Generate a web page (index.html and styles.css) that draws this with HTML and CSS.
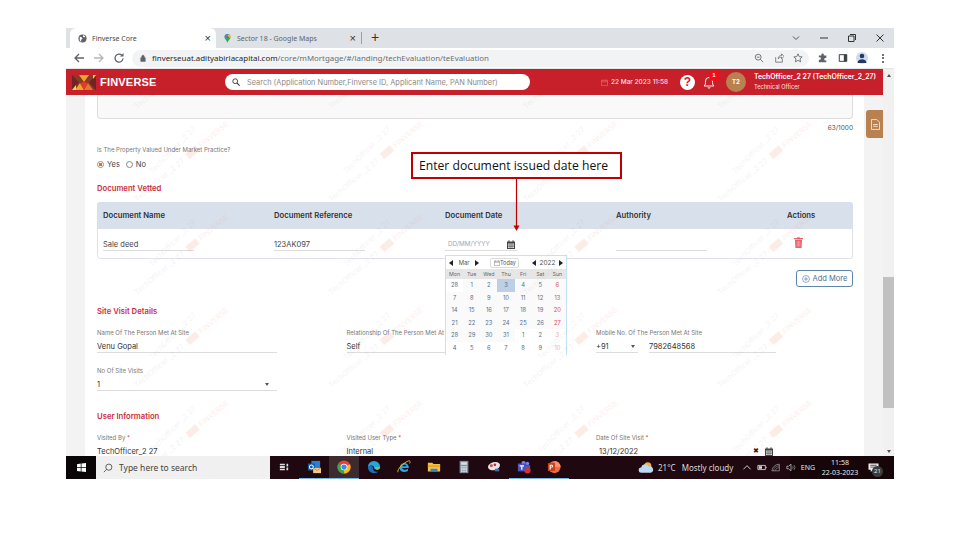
FILE: index.html
```html
<!DOCTYPE html>
<html lang="en">
<head>
<meta charset="utf-8">
<title>Finverse Core</title>
<link rel="stylesheet" href="styles.css">
</head>
<body>
<div class="screen">
  <div class="tabstrip">
    <div class="tab active">
      <svg class="fav" viewBox="0 0 10 10"><circle cx="5" cy="5" r="4.5" fill="#5f6368"/><path d="M2 3l2 .5 1 1.500-1.500 1.500V9L2 7zM6 1l2 1.500L7 4 5.500 3z" fill="#fff"/></svg>
      <span class="tabtitle">Finverse Core</span><span class="tabx">×</span>
    </div>
    <div class="tab">
      <svg class="fav" viewBox="0 0 10 12"><path d="M5 0a4 4 0 0 1 4 4c0 3-3 4-4 8C4 8 1 7 1 4a4 4 0 0 1 4-4z" fill="#34a853"/><path d="M2 1.500A4 4 0 0 1 5 0l2 2-4 3-2-1a4 4 0 0 1 1-2.500z" fill="#4285f4"/><path d="M7 .5A4 4 0 0 1 9 4L7 5 5 2z" fill="#fbbc04"/><circle cx="5" cy="4" r="1.500" fill="#ea4335"/></svg>
      <span class="tabtitle">Sector 18 - Google Maps</span><span class="tabx">×</span>
    </div>
    <span class="tabsep"></span>
    <span class="tabplus">+</span>
    <div class="winctl">
      <svg viewBox="0 0 10 10"><path d="M2 3.500l3 3 3-3" fill="none" stroke="#555" stroke-width="1"/></svg>
      <svg viewBox="0 0 10 10"><path d="M1 5h8" stroke="#333" stroke-width="1"/></svg>
      <svg viewBox="0 0 10 10"><path d="M3 1.500h5.500V7M1.500 3h5.500v5.500H1.500z" fill="none" stroke="#333" stroke-width="1"/></svg>
      <svg viewBox="0 0 10 10"><path d="M1.500 1.500l7 7M8.500 1.500l-7 7" stroke="#333" stroke-width="1"/></svg>
    </div>
  </div>

  <div class="toolbar">
    <svg class="navbtn" viewBox="0 0 12 12"><path d="M11 6H2M6 2L2 6l4 4" fill="none" stroke="#5f6368" stroke-width="1.300"/></svg>
    <svg class="navbtn" viewBox="0 0 12 12"><path d="M1 6h9M6 2l4 4-4 4" fill="none" stroke="#b4b7bb" stroke-width="1.300"/></svg>
    <svg class="navbtn" viewBox="0 0 12 12"><path d="M10 6.500A4 4 0 1 1 8.800 3.200" fill="none" stroke="#5f6368" stroke-width="1.300"/><path d="M10.500 1v3.500H7z" fill="#5f6368"/></svg>
    <div class="omnibox">
      <svg class="lock" viewBox="0 0 8 10"><path d="M1 4.500h6V9.500H1zM2.300 4.500V3a1.700 1.700 0 0 1 3.400 0v1.500" fill="#5f6368" stroke="#5f6368" stroke-width=".7"/></svg>
      <span class="url"><span class="host">finverseuat.adityabirlacapital.com</span>/core/mMortgage/#/landing/techEvaluation/teEvaluation</span>
      <svg class="omni-ic" viewBox="0 0 12 12"><circle cx="5" cy="5" r="3.500" fill="none" stroke="#5f6368"/><path d="M7.500 7.500L11 11M3.300 5h3.400" stroke="#5f6368"/></svg>
      <svg class="omni-ic" viewBox="0 0 12 12"><path d="M2 5v6h8V7M5 7c0-3 2-4 4-4V1l3 3-3 3V5C7 5 6 6 5 7z" fill="none" stroke="#5f6368" stroke-width=".9"/></svg>
      <svg class="omni-ic" viewBox="0 0 12 12"><path d="M6 1l1.500 3.300 3.500.4-2.600 2.400.7 3.500L6 8.800l-3.100 1.800.7-3.500L1 4.700l3.500-.4z" fill="none" stroke="#5f6368"/></svg>
    </div>
    <svg class="tool-ic first" viewBox="0 0 12 12"><path d="M1 3h3V2a1.500 1.500 0 0 1 3 0v1h3v3H9a1.500 1.500 0 0 0 0 3h1v2H1V8h1a1.500 1.500 0 0 0 0-3H1z" fill="#5f6368"/></svg>
    <svg class="tool-ic" viewBox="0 0 12 12"><path d="M1.500 2h9v8h-9z" fill="none" stroke="#3c4043" stroke-width="1.200"/><path d="M7 2h3.500v8H7z" fill="#3c4043"/></svg>
    <span class="profile"><svg viewBox="0 0 12 12"><circle cx="6" cy="4" r="2.300" fill="#1f3a68"/><path d="M1.500 11c0-5 9-5 9 0z" fill="#1f3a68"/></svg></span>
    <span class="dots"><i></i><i></i><i></i></span>
  </div>

  <div class="viewport">
    <div class="app">
      <header class="appbar">
        <svg class="logo" viewBox="0 0 24 15"><rect width="24" height="15" fill="#8a3a28"/><path d="M0 0l7 7.500L0 15zM24 0l-7 7.500 7 7.500z" fill="#6e2622"/><path d="M7 0l5 7 5-7zM3 15l5-7 4 7z" fill="#f0a52a"/><path d="M12 15l4-7 5 7z" fill="#e8762a"/><path d="M8 8l4-1 4 1-4 7z" fill="#e23a2c"/><path d="M0 15l4-5v5zM24 0l-3 4V0z" fill="#f5d84a"/></svg>
        <span class="brand">FINVERSE</span>
        <div class="search">
          <svg viewBox="0 0 10 10"><circle cx="4" cy="4" r="3" fill="none" stroke="#333" stroke-width="1.100"/><path d="M6.300 6.300L9.500 9.500" stroke="#333" stroke-width="1.300"/></svg>
          <span>Search (Application Number,Finverse ID, Applicant Name, PAN Number)</span>
        </div>
        <svg class="dateic" viewBox="0 0 8 8"><path d="M.5 1.500h7v6h-7zM.5 3.200h7M2.300.5v1.500M5.700.5v1.500" fill="none" stroke="#e27a6e" stroke-width=".7"/></svg>
        <span class="datetxt">22 Mar 2023 11:58</span>
        <span class="helpic">?</span>
        <span class="bell">
          <svg viewBox="0 0 12 14"><path d="M1 11c1.500-1 1.500-2.500 1.500-5a3.500 3.500 0 0 1 7 0c0 2.500 0 4 1.500 5zM5 12.300a1 1 0 0 0 2 0" fill="none" stroke="#fff" stroke-width=".9"/></svg>
          <b class="badge">1</b>
        </span>
        <span class="avatar">T2</span>
        <div class="who">
          <div class="who-name">TechOfficer_2 27 (TechOfficer_2_27)</div>
          <div class="who-role">Technical Officer</div>
        </div>
      </header>

      <div class="body">
        <main class="form">
          <div class="notebox"></div>
          <div class="counter">63/1000</div>
          <div class="label q">Is The Property Valued Under Market Practice?</div>
          <div class="radios">
            <span class="radio on"></span><span>Yes</span>
            <span class="radio second"></span><span>No</span>
          </div>
          <h2 class="title vetted">Document Vetted</h2>
          <div class="doc-table">
            <div class="doc-head">
              <span>Document Name</span><span>Document Reference</span><span>Document Date</span><span>Authority</span><span>Actions</span>
            </div>
            <div class="doc-row">
              <div class="cell"><span class="uline">Sale deed</span></div>
              <div class="cell"><span class="uline">123AK097</span></div>
              <div class="cell datecell">
                <span class="uline dateinput"><span class="ph">DD/MM/YYYY</span>
                  <svg class="calic" viewBox="0 0 8 9"><path d="M0 1.500h8V9H0z" fill="#444"/><path d="M1 3.500h6v4.500H1z" fill="#ddd"/><path d="M1 5h6M1 6.500h6M3 3.500V8M5 3.500V8" stroke="#444" stroke-width=".5"/><path d="M2 .3v2M6 .3v2" stroke="#444"/></svg>
                </span>
                <div class="calendar">
                  <div class="cal-nav">
                    <span class="tri l"></span><span class="cal-m">Mar</span><span class="tri r"></span>
                    <span class="today">
                      <svg viewBox="0 0 8 8"><path d="M.5 1.500h7v6h-7zM.5 3h7M2 .5v1.500M6 .5v1.500" fill="none" stroke="#666" stroke-width=".6"/></svg>Today</span>
                    <span class="tri l y"></span><span class="cal-y">2022</span><span class="tri r"></span>
                  </div>
                  <div class="cal-grid heads"><span>Mon</span><span>Tue</span><span>Wed</span><span>Thu</span><span>Fri</span><span>Sat</span><span>Sun</span></div>
                  <div class="cal-grid days">
                    <span>28</span><span>1</span><span>2</span><span class="sel">3</span><span>4</span><span>5</span><span class="sun">6</span>
                    <span>7</span><span>8</span><span>9</span><span>10</span><span>11</span><span>12</span><span class="sun">13</span>
                    <span>14</span><span>15</span><span>16</span><span>17</span><span>18</span><span>19</span><span class="sun">20</span>
                    <span>21</span><span>22</span><span>23</span><span>24</span><span>25</span><span>26</span><span class="sun">27</span>
                    <span>28</span><span>29</span><span>30</span><span>31</span><span class="out">1</span><span class="out">2</span><span class="sun out">3</span>
                    <span class="out">4</span><span class="out">5</span><span class="out">6</span><span class="out">7</span><span class="out">8</span><span class="out">9</span><span class="sun out">10</span>
                  </div>
                </div>
              </div>
              <div class="cell"><span class="uline"></span></div>
              <div class="cell act">
                <svg class="trash" viewBox="0 0 10 12"><path d="M3.500 1V.3h3V1H10v1.300H0V1z" fill="#e8626c"/><path d="M1 3h8l-.6 9H1.600z" fill="#e8626c"/><path d="M3.500 4.500v6M5 4.500v6M6.500 4.500v6" stroke="#f6c3c7" stroke-width=".6"/></svg>
              </div>
            </div>
          </div>
          <div class="addrow">
            <span class="addmore"><svg viewBox="0 0 10 10"><circle cx="5" cy="5" r="4.300" fill="none" stroke="#527da3" stroke-width=".8"/><path d="M5 2.500v5M2.500 5h5" stroke="#527da3" stroke-width=".8"/></svg>Add More</span>
          </div>

          <h2 class="title site">Site Visit Details</h2>
          <div class="fields">
            <div class="field"><div class="label">Name Of The Person Met At Site</div><div class="value">Venu Gopal</div></div>
            <div class="field"><div class="label">Relationship Of The Person Met At Site</div><div class="value">Self</div></div>
            <div class="field"><div class="label">Mobile No. Of The Person Met At Site</div>
              <div class="phone">
                <div class="value">+91<span class="caret"></span></div>
                <div class="value">7982648568</div>
              </div>
            </div>
            <div class="field"><div class="label">No Of Site Visits</div><div class="value">1<span class="caret wide"></span></div></div>
          </div>

          <h2 class="title user">User Information</h2>
          <div class="fields">
            <div class="field"><div class="label">Visited By <em>*</em></div><div class="value">TechOfficer_2 27</div></div>
            <div class="field"><div class="label">Visited User Type <em>*</em></div><div class="value">Internal</div></div>
            <div class="field"><div class="label">Date Of Site Visit <em>*</em></div>
              <div class="value dateval"><span>13/12/2022</span>
                <span class="clr">✖</span>
                <svg class="calic" viewBox="0 0 8 9"><path d="M0 1.500h8V9H0z" fill="#444"/><path d="M1 3.500h6v4.500H1z" fill="#ddd"/><path d="M1 5h6M1 6.500h6M3 3.500V8M5 3.500V8" stroke="#444" stroke-width=".5"/><path d="M2 .3v2M6 .3v2" stroke="#444"/></svg>
              </div>
            </div>
          </div>
        </main>
        <div class="sidetab">
          <svg viewBox="0 0 10 12"><path d="M.5.500h6l3 3v8H.5z" fill="none" stroke="#fff" stroke-width=".8"/><path d="M2.500 6h5M2.500 8h5" stroke="#fff" stroke-width=".8"/></svg>
        </div>
        <svg class="wm" width="817" height="361" aria-hidden="true">
          <defs>
            <pattern id="wmp" x="66" y="19" width="194.500" height="93" patternUnits="userSpaceOnUse">
              <text x="20" y="60" transform="rotate(-45 20 60)" class="wm-t">TechOfficer _2 27</text>
              <g transform="rotate(-40 5 88)">
                <text x="5" y="88" class="wm-t">TechOfficer _2 27</text>
                <rect x="73" y="82" width="13" height="7" class="wm-logo"/>
                <text x="89" y="88" class="wm-f">FINVERSE</text>
              </g>
            </pattern>
          </defs>
          <rect width="817" height="361" fill="url(#wmp)"/>
        </svg>
      </div>
    </div>
    <div class="scrollbar">
      <span class="sb-up"></span>
      <span class="sb-thumb"></span>
      <span class="sb-down"></span>
    </div>
  </div>

  <footer class="taskbar">
    <span class="start"><svg viewBox="0 0 12 12"><path d="M0 1.500l5-.7v4.700H0zM6 .7L12 0v5.500H6zM0 6.500h5v4.700l-5-.7zM6 6.500h6V12l-6-.7z" fill="#fff"/></svg></span>
    <div class="tsearch">
      <svg viewBox="0 0 12 12"><circle cx="7" cy="5" r="3.700" fill="none" stroke="#333" stroke-width=".9"/><path d="M4.300 7.700L1 11" stroke="#333" stroke-width=".9"/></svg>
      <span>Type here to search</span>
    </div>
    <div class="tasks">
      <span class="ti"><svg class="i12" viewBox="0 0 12 12"><path d="M1 2h6v1.500H1zM1 4.500h6v3H1zM1 8.500h6V10H1zM9 2h2v3.500H9zM9 6.500h2V10H9z" fill="#ddd"/></svg></span>
      <span class="ti app-on"><svg viewBox="0 0 16 16"><rect x="5" y="1" width="10" height="8" fill="#2a7fd0"/><rect x="1" y="4" width="8" height="8" fill="#0f5aa6"/><circle cx="5" cy="8" r="2.200" fill="none" stroke="#fff" stroke-width="1.200"/><path d="M7 9h9v6H7z" fill="#f3c98b"/><path d="M7 9l4.500 3L16 9" fill="none" stroke="#b97a3a" stroke-width=".8"/></svg></span>
      <span class="ti app-on cur"><svg viewBox="0 0 16 16"><circle cx="8" cy="8" r="7.500" fill="#ea4335"/><path d="M8 8L1.500 4.300A7.500 7.500 0 0 0 8 15.500z" fill="#34a853"/><path d="M8 8l6.800-3.200A7.500 7.500 0 0 1 8 15.500z" fill="#fbbc04"/><circle cx="8" cy="8" r="3.800" fill="#fff"/><circle cx="8" cy="8" r="3" fill="#4285f4"/></svg></span>
      <span class="ti"><svg viewBox="0 0 16 16"><path d="M1 8a7 7 0 0 1 14 0c0 2-1.500 3-3.500 3S8 10 8 8.500C8 6 4 5 1 8z" fill="#2ba4d8"/><path d="M1 8c0 4 3 7 7 7 2 0 4-1 5-2-3 1-6 0-6-3 0-2-1-3-2-3.500C3 6.500 1.500 7 1 8z" fill="#1b6fb8"/><path d="M9 8c2 0 5 0 6 .5 0 1.500-2 3-4 2.500-1.500-.3-2-2-2-3z" fill="#5fd06a"/></svg></span>
      <span class="ti"><svg viewBox="0 0 16 16"><path d="M3 9.500C3 6 5.500 3.500 8.500 3.500S13.500 6 13.500 9H6c.2 2 3.500 3 6.500 1l0 2.500C8 15 3 13.500 3 9.500zM6 7h4.800C10.500 5 6.500 5 6 7z" fill="#2aa6e8"/><path d="M1 14C0 10 8 3 13 1c2-.5 2.500 1 1.500 3" fill="none" stroke="#f4c430" stroke-width="1"/></svg></span>
      <span class="ti"><svg viewBox="0 0 16 16"><path d="M1 3h5l1.500 1.500H15V13H1z" fill="#f5c342"/><path d="M1 6h14v2H1z" fill="#e6a526"/><path d="M4 10h8v3H4z" fill="#2b87d1"/></svg></span>
      <span class="ti"><svg viewBox="0 0 16 16"><path d="M3 1h10v14H3z" fill="#7f8f9c"/><path d="M4.500 2.500h7v3h-7z" fill="#d5dde3"/><path d="M4.500 7h2v1.500h-2zM7 7h2v1.500H7zM9.500 7h2v1.500h-2zM4.500 9.500h2V11h-2zM7 9.500h2V11H7zM9.500 9.500h2V11h-2zM4.500 12h2v1.500h-2zM7 12h2v1.500H7zM9.500 12h2v1.500h-2z" fill="#e8eef2"/></svg></span>
      <span class="ti"><svg viewBox="0 0 16 16"><ellipse cx="8" cy="7" rx="7" ry="4.500" fill="#e5e5e8" transform="rotate(-15 8 7)"/><circle cx="5" cy="6.500" r="1.700" fill="#d14a4a"/><circle cx="9" cy="5.500" r="1.500" fill="#a33"/><path d="M9 10h5v3H9z" fill="#3e6db5"/></svg></span>
      <span class="ti app-on"><svg viewBox="0 0 16 16"><circle cx="12" cy="4" r="2" fill="#7b83eb"/><circle cx="7.500" cy="3.500" r="2.500" fill="#7b83eb"/><path d="M9 6h6v6l-3 1.500L9 12z" fill="#5059c9"/><path d="M1 4h9v9H1z" fill="#4b53bc"/><path d="M3 6h5v1.300H6.200V11H4.800V7.300H3z" fill="#fff"/><circle cx="12" cy="12" r="3.500" fill="#d13438"/></svg></span>
      <span class="ti app-on"><svg viewBox="0 0 16 16"><circle cx="8.500" cy="8" r="7" fill="#ed6c47"/><path d="M8.500 1a7 7 0 0 1 7 7h-7z" fill="#ff8f6b"/><path d="M1 3.500h8v9H1z" fill="#c43e1c"/><path d="M3 5.500h2.500a1.600 1.600 0 0 1 0 3.200H4.200V11H3zM4.200 6.500v1.300h1.100a.65.65 0 0 0 0-1.300z" fill="#fff"/></svg></span>
    </div>
    <div class="weather">
      <svg viewBox="0 0 18 14"><circle cx="11" cy="5" r="4" fill="#f0b040"/><path d="M4 13a3 3 0 0 1-.5-6A4.500 4.500 0 0 1 12 6a3.500 3.500 0 0 1 2.500 7z" fill="#bcd9f2"/></svg>
      <span>21°C</span><span>Mostly cloudy</span>
    </div>
    <div class="tray">
      <svg class="tr" viewBox="0 0 10 10"><path d="M1 7l4-4 4 4" fill="none" stroke="#ddd" stroke-width="1"/></svg>
      <svg class="tr" viewBox="0 0 12 10"><path d="M1 2.500h9v5H1z" fill="none" stroke="#ddd"/><path d="M2 3.500h4v3H2z" fill="#ddd"/><path d="M10.500 4h1v2h-1z" fill="#ddd"/></svg>
      <svg class="tr" viewBox="0 0 12 10"><path d="M1 9a9 9 0 0 1 9-8v8z" fill="none" stroke="#aaa" stroke-width=".8"/><path d="M5 9a5 5 0 0 1 5-4M3 9a7 7 0 0 1 7-6" fill="none" stroke="#aaa" stroke-width=".6"/></svg>
      <svg class="tr" viewBox="0 0 12 10"><path d="M1 3.500h2L6 1v8L3 6.500H1z" fill="none" stroke="#ddd" stroke-width=".8"/><path d="M8 3.500a2.500 2.500 0 0 1 0 3M9.500 2a4.500 4.500 0 0 1 0 6" fill="none" stroke="#bbb" stroke-width=".7"/></svg>
      <span class="eng">ENG</span>
      <div class="clock"><div>11:58</div><div>22-03-2023</div></div>
      <span class="notif"><svg viewBox="0 0 12 11"><path d="M.5.500h11v7h-6L3 10V7.500H.5z" fill="#eee"/><path d="M2.500 2.500h7M2.500 4.500h7" stroke="#222" stroke-width=".8"/></svg><b>21</b></span>
    </div>
  </footer>

  <div class="callout">Enter document issued date here</div>
  <svg class="arrow" viewBox="0 0 9 53"><path d="M4.500 0v47" stroke="#c00000" stroke-width="1.200"/><path d="M1.500 46.500h6L4.500 52z" fill="#c00000"/></svg>
</div>
</body>
</html>
```

FILE: styles.css
```css
* { box-sizing: border-box; }
html, body { margin: 0; height: 100%; }
body { background: #fff; padding: 28px 66px 0; font-family: Inter, "Noto Sans", sans-serif; overflow: hidden; }
h2 { margin: 0; }
svg { display: block; flex: none; }

.screen { position: relative; width: 828px; height: 451px; display: flex; flex-direction: column; overflow: hidden; }

/* Browser chrome */
.tabstrip { height: 20px; background: #dee1e6; display: flex; align-items: stretch; padding-left: 4px; flex: none; }
.tab { width: 146px; display: flex; align-items: center; padding: 0 5px 0 8px; font: 7px "Noto Sans", sans-serif; color: #5f6368; }
.tab + .tab { width: 143px; padding: 0 3px 0 7px; }
.tab.active { background: #fff; border-radius: 6px 6px 0 0; color: #45494d; }
.fav { width: 9px; height: 9px; margin-right: 5px; }
.tabtitle { flex: 1; white-space: nowrap; }
.tabx { font: 11px "Liberation Sans", sans-serif; color: #333; }
.tabsep { width: 1px; height: 12px; background: #9aa0a6; margin: 4px 0 0 2px; }
.tabplus { font: 14px/19px "Liberation Sans", sans-serif; color: #333; margin-left: 9px; }
.winctl { margin-left: auto; display: flex; gap: 18px; align-items: center; padding-right: 9px; }
.winctl svg { width: 10px; height: 10px; }

.toolbar { height: 21px; background: #fff; display: flex; align-items: center; padding-left: 7px; flex: none; border-bottom: 1px solid #e4e4e4; }
.navbtn { width: 12px; height: 12px; margin-right: 8px; }
.omnibox { width: 677px; height: 17px; background: #f1f3f4; border-radius: 9px; display: flex; align-items: center; padding-left: 8px; margin-left: -1px; }
.lock { width: 6px; height: 8px; margin-right: 6px; }
.url { flex: 1; font: 7.900px "Noto Sans", sans-serif; color: #6b6f73; white-space: nowrap; }
.host { color: #25282b; }
.omni-ic { width: 10px; height: 10px; margin-right: 9.500px; }
.omni-ic:last-child { margin-right: 6px; }
.tool-ic { width: 10px; height: 10px; margin-left: 10px; }
.tool-ic.first { margin-left: 9px; }
.profile { width: 12px; height: 12px; margin-left: 8px; border-radius: 50%; background: #d3dbe8; display: block; }
.dots { display: flex; flex-direction: column; gap: 1.500px; margin-left: 14px; }
.dots i { width: 2px; height: 2px; background: #444; border-radius: 50%; display: block; }

.viewport { flex: 1; display: flex; min-height: 0; }
.app { width: 817px; display: flex; flex-direction: column; }
.scrollbar { flex: 1; background: #f1f1f1; display: flex; flex-direction: column; align-items: center; padding-top: 5px; }
.sb-up { border: 2.500px solid transparent; border-top: 0; border-bottom: 3px solid #505050; }
.sb-thumb { width: 100%; height: 131px; background: #c1c1c1; margin-top: 200px; }
.sb-down { border: 2.500px solid transparent; border-bottom: 0; border-top: 3px solid #505050; margin-top: auto; margin-bottom: 3px; }

/* App header */
.appbar { height: 26px; background: #c7202b; display: flex; align-items: center; padding-left: 6px; color: #fff; flex: none; }
.logo { width: 24px; height: 15px; }
.brand { font: bold 11px "Liberation Sans", sans-serif; letter-spacing: .2px; margin-left: 4px; width: 125px; }
.search { width: 305px; height: 16px; background: #fff; border-radius: 8px; display: flex; align-items: center; padding-left: 7px; color: #8a8a8a; font: 7.400px Inter, sans-serif; }
.search svg { width: 8px; height: 8px; margin-right: 7px; }
.search span { white-space: nowrap; }
.dateic { width: 7px; height: 7px; margin-left: 71px; }
.datetxt { font-size: 6.500px; font-weight: 500; margin-left: 3px; width: 59px; white-space: nowrap; color: #f7dfe0; }
.helpic { width: 15px; height: 15px; border-radius: 50%; background: #fff; color: #c7202b; font: bold 12px/15px "Liberation Sans", sans-serif; text-align: center; margin-left: 10px; }
.bell { position: relative; width: 12px; height: 14px; margin-left: 8px; }
.bell svg { width: 12px; height: 14px; }
.badge { position: absolute; left: 5.500px; top: -5px; width: 11px; height: 11px; border-radius: 50%; background: #f30d17; font: bold 6px/11px "Liberation Sans", sans-serif; text-align: center; }
.avatar { width: 20px; height: 20px; margin-left: 11px; border-radius: 50%; background: #b9814f; font: bold 6px/20px Inter, sans-serif; text-align: center; }
.who { margin-left: 8px; white-space: nowrap; }
.who-name { font-size: 6.900px; font-weight: 600; line-height: 10px; }
.who-role { font-size: 5.600px; font-weight: 500; line-height: 10px; color: #f3d5d6; }

/* Page body */
.body { position: relative; flex: 1; min-height: 0; overflow: hidden; background: #f3f3f3; }
.form { width: 779px; height: 100%; margin-left: 19px; padding: 0 11px 0 12px; background: #fff; overflow: hidden; font-size: 7.500px; color: #333; }
.notebox { height: 24px; border: 1px solid #dcdcdc; border-top: 0; border-radius: 0 0 4px 4px; background: #f9f9f9; }
.counter { font-size: 6.500px; line-height: 10px; text-align: right; margin-top: 4px; color: #555; }
.label { font-size: 6px; line-height: 8px; color: #777; white-space: nowrap; }
.label em { color: #d9363e; font-style: normal; }
.q { margin-top: 13px; }
.radios { display: flex; align-items: center; margin-top: 5px; height: 10px; font-size: 7.500px; color: #444; gap: 3px; }
.radio { width: 7px; height: 7px; border: 1px solid #888; border-radius: 50%; }
.radio.on { border-color: #c08a5c; background: radial-gradient(circle, #c57a3e 0 1.500px, #fff 2px); }
.radio.second { margin-left: 3px; }
.title { font-size: 7.700px; line-height: 10px; font-weight: 600; color: #cf2c3a; }
.vetted { margin-top: 15px; }
.site { margin-top: 20px; }
.user { margin-top: 21px; }

.doc-table { margin-top: 8px; height: 57px; border: 1px solid #dfe3e7; border-radius: 3px; }
.doc-head, .doc-row { display: grid; grid-template-columns: repeat(4, 171px) 1fr; padding-left: 5px; }
.doc-head { height: 27px; margin: -1px -1px 0; padding-left: 6px; background: #d8e1eb; border-radius: 3px 3px 0 0; align-items: center; font-size: 7.700px; font-weight: 600; color: #333; }
.doc-row { height: 30px; align-items: start; padding-top: 8px; }
.cell { position: relative; height: 14px; }
.uline { display: block; width: 91px; height: 14px; line-height: 15px; border-bottom: 1px solid #ddd; color: #444; }
.dateinput { width: 72px; display: flex; align-items: center; justify-content: space-between; padding: 2px 2px 0 3px; }
.ph { font-size: 6.300px; color: #a5a5a5; }
.calic { width: 8px; height: 9px; }
.act { padding-left: 7px; }
.trash { width: 9px; height: 11px; }

/* Datepicker */
.calendar { position: absolute; left: 0; top: 18px; width: 122px; height: 100px; background: #fff; border: 1px solid #c4e2ef; z-index: 2; font-size: 5.800px; color: #54708f; }
.cal-nav { display: flex; align-items: center; height: 13px; padding-left: 3px; color: #555; }
.tri { width: 0; height: 0; border: 3px solid transparent; flex: none; }
.tri.l { border-right: 4px solid #222; border-left: 0; }
.tri.r { border-left: 4px solid #222; border-right: 0; }
.tri.y { margin-left: 13px; }
.cal-m { width: 22px; text-align: center; }
.today { margin-left: 11px; height: 10px; width: 29px; border: 1px solid #ddd; border-radius: 2px; display: flex; align-items: center; font-size: 5.500px; padding-left: 3px; }
.today svg { width: 6px; height: 6px; }
.cal-y { width: 19px; text-align: center; margin: 0 2px; font-size: 6.500px; }
.cal-grid { display: grid; grid-template-columns: repeat(7, 1fr); text-align: center; }
.heads { background: #e6e6e6; height: 10px; line-height: 10px; font-size: 5.300px; color: #666; }
.days { grid-auto-rows: 12.600px; line-height: 12.600px; }
.days span { background: #fafafa; }
.days span.out, .days span:first-child { background: #fff; color: #667; }
.days .sel { background: #bccfe4; }
.days .sun { color: #dd4b55; }
.days .sun.out { color: #f0a9ae; }

.addrow { display: flex; justify-content: flex-end; margin-top: 11px; }
.addmore { width: 57px; height: 17px; border: 1px solid #5d86aa; border-radius: 3px; display: flex; align-items: center; justify-content: center; gap: 3px; font-size: 7.500px; color: #4d6f90; }
.addmore svg { width: 8px; height: 8px; }

.fields { display: grid; grid-template-columns: repeat(3, 180px); column-gap: 69.500px; row-gap: 14px; margin-top: 12px; }
.value { height: 16px; line-height: 13px; padding-top: 3px; border-bottom: 1px solid #ddd; color: #333; font-size: 7.500px; position: relative; white-space: nowrap; }
.phone { display: grid; grid-template-columns: 42px 127px; column-gap: 11px; }
.caret { position: absolute; right: 3px; top: 8px; border: 2.500px solid transparent; border-bottom: 0; border-top: 3px solid #555; }
.caret.wide { right: 8px; }
.dateval { display: flex; align-items: center; padding: 3px 3px 0; }
.dateval > span:first-child { flex: 1; }
.clr { font-size: 6.500px; color: #222; margin-right: 6px; }

.sidetab { position: absolute; left: 800px; top: 15px; width: 18px; height: 28px; background: #b9814f; border-radius: 3px 0 0 3px; display: flex; align-items: center; justify-content: center; }
.sidetab svg { width: 9px; height: 11px; }
.wm { position: absolute; left: 0; top: 0; pointer-events: none; z-index: 3; }
.wm-t { font: 7.500px Inter, sans-serif; fill: rgba(60, 60, 60, .07); }
.wm-f { font: 7.500px Inter, sans-serif; fill: rgba(214, 60, 40, .1); }
.wm-logo { fill: rgba(235, 110, 60, .13); }

/* Windows taskbar */
.taskbar { height: 23px; background: linear-gradient(90deg, #1f0810 724px, #160609 724px); display: flex; align-items: center; flex: none; color: #e6e6e6; }
.start { width: 30px; height: 100%; background: #0a0507; display: flex; align-items: center; justify-content: center; }
.start svg { width: 9px; height: 9px; }
.tsearch { width: 174px; height: 100%; background: #f0f0f0; display: flex; align-items: center; padding-left: 7px; color: #444; font: 8.500px "Noto Sans", sans-serif; }
.tsearch svg { width: 10px; height: 10px; margin-right: 6px; }
.tasks { display: flex; height: 100%; width: 300px; margin-left: -1px; }
.ti { width: 30px; height: 100%; display: flex; align-items: center; justify-content: center; border-bottom: 1.500px solid transparent; }
.ti svg { width: 14px; height: 14px; }
.ti svg.i12 { width: 10px; height: 10px; }
.app-on { border-bottom-color: #77b8e8; }
.cur { background: #3c2a2f; }
.weather { display: flex; align-items: center; font: 8px "Noto Sans", sans-serif; gap: 6px; color: #d9d9d9; margin-left: 69px; width: 104px; }
.weather svg { width: 16px; height: 13px; margin-right: -2px; flex: none; }
.weather span { white-space: nowrap; }
.tray { flex: 1; height: 100%; display: flex; align-items: center; font: 7px "Noto Sans", sans-serif; }
.tr { width: 10px; height: 9px; margin-right: 4.500px; }
.eng { width: 16px; text-align: center; white-space: nowrap; }
.clock { text-align: center; width: 42px; margin-left: 3px; line-height: 10px; }
.notif { position: relative; margin-left: 7px; }
.notif svg { width: 11px; height: 10px; }
.notif b { position: absolute; left: 4px; top: 3px; width: 11px; height: 11px; border-radius: 50%; background: #3c3c3c; font: 6px/11px "Noto Sans", sans-serif; text-align: center; }

/* Slide annotation */
.callout { position: absolute; left: 345px; top: 124px; width: 211px; height: 27px; padding-right: 6px; border: 2px solid #c00000; background: #fff; color: #111; font: 12.200px/23px "Open Sans", sans-serif; text-align: center; z-index: 5; }
.arrow { position: absolute; left: 446px; top: 151px; width: 9px; height: 53px; z-index: 5; }
```
